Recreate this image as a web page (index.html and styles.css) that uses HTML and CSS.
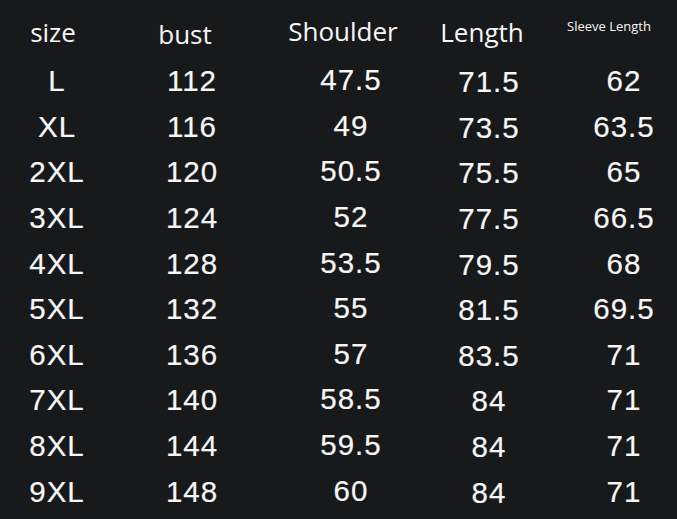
FILE: index.html
```html
<!DOCTYPE html>
<html>
<head>
<meta charset="utf-8">
<link rel="stylesheet" href="styles.css">
</head>
<body>
<div class="chart">
  <div class="h h-size">size</div>
  <div class="h h-bust">bust</div>
  <div class="h h-shoulder">Shoulder</div>
  <div class="h h-length">Length</div>
  <div class="h h-sleeve">Sleeve Length</div>

  <div class="c c-size">L</div><div class="c c-bust">112</div><div class="c c-shoulder">47.5</div><div class="c c-length">71.5</div><div class="c c-sleeve">62</div>
  <div class="c c-size">XL</div><div class="c c-bust">116</div><div class="c c-shoulder">49</div><div class="c c-length">73.5</div><div class="c c-sleeve">63.5</div>
  <div class="c c-size">2XL</div><div class="c c-bust">120</div><div class="c c-shoulder">50.5</div><div class="c c-length">75.5</div><div class="c c-sleeve">65</div>
  <div class="c c-size">3XL</div><div class="c c-bust">124</div><div class="c c-shoulder">52</div><div class="c c-length">77.5</div><div class="c c-sleeve">66.5</div>
  <div class="c c-size">4XL</div><div class="c c-bust">128</div><div class="c c-shoulder">53.5</div><div class="c c-length">79.5</div><div class="c c-sleeve">68</div>
  <div class="c c-size">5XL</div><div class="c c-bust">132</div><div class="c c-shoulder">55</div><div class="c c-length">81.5</div><div class="c c-sleeve">69.5</div>
  <div class="c c-size">6XL</div><div class="c c-bust">136</div><div class="c c-shoulder">57</div><div class="c c-length">83.5</div><div class="c c-sleeve">71</div>
  <div class="c c-size">7XL</div><div class="c c-bust">140</div><div class="c c-shoulder">58.5</div><div class="c c-length">84</div><div class="c c-sleeve">71</div>
  <div class="c c-size">8XL</div><div class="c c-bust">144</div><div class="c c-shoulder">59.5</div><div class="c c-length">84</div><div class="c c-sleeve">71</div>
  <div class="c c-size">9XL</div><div class="c c-bust">148</div><div class="c c-shoulder">60</div><div class="c c-length">84</div><div class="c c-sleeve">71</div>
</div>
</body>
</html>
```
FILE: styles.css
```css
html, body {
  margin: 0;
  padding: 0;
  background: #18191b;
  width: 677px;
  height: 519px;
  overflow: hidden;
}

.chart {
  display: grid;
  grid-template-columns: 114px 156px 162px 114px 131px;
  grid-template-rows: 58.2px;
  grid-auto-rows: 45.6px;
  color: #f7f7f7;
}

.h {
  font-family: "Open Sans", "Noto Sans", sans-serif;
  font-size: 26px;
  line-height: 26px;
  text-align: center;
  white-space: nowrap;
}

.h-size { padding: 19px 8px 0 0; }
.h-bust { padding: 20.5px 14px 0 0; }
.h-shoulder { padding: 17.6px 16px 0 0; }
.h-length { padding: 18.6px 14px 0 0; }
.h-sleeve {
  font-size: 13px;
  line-height: 13px;
  padding: 19.5px 5px 0 0;
}

.c {
  font-family: "Liberation Sans", Arial, sans-serif;
  font-size: 29.5px;
  line-height: 45.6px;
  letter-spacing: 1px;
  text-align: center;
  white-space: nowrap;
  -webkit-text-stroke: 0.2px #f7f7f7;
}

.c-shoulder { margin-top: -1px; }
.c-length { margin-top: 1px; }
.c-sleeve { padding-left: 25px; }
```
